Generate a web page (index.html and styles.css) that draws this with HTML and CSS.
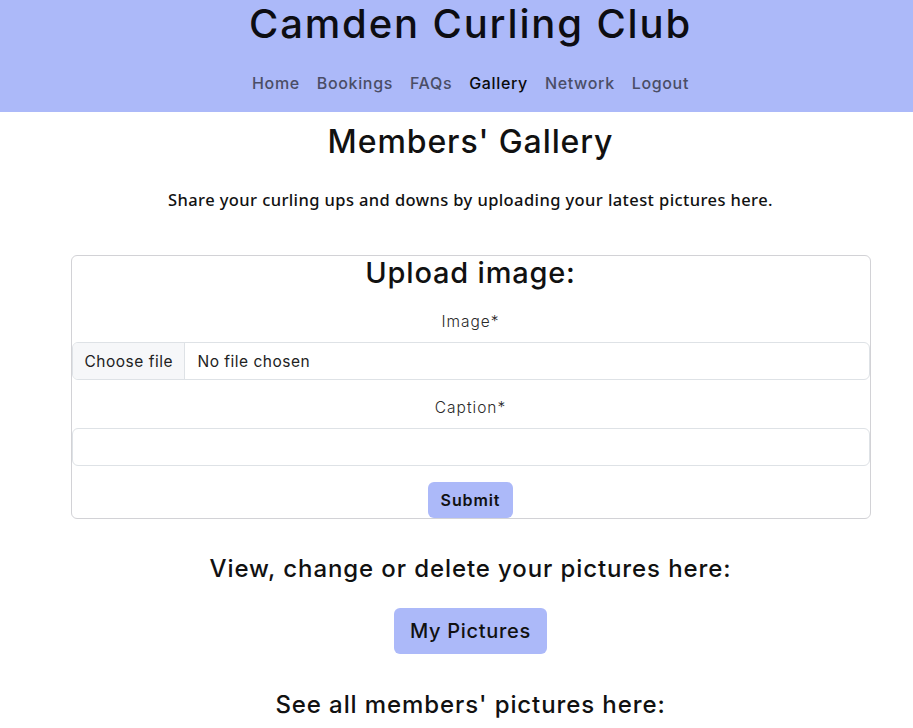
FILE: index.html
```html
<!DOCTYPE html>
<html lang="en">
<head>
<meta charset="utf-8">
<title>Camden Curling Club - Gallery</title>
<link rel="stylesheet" href="styles.css">
</head>
<body>
<header class="site-header">
  <h1 class="site-title">Camden Curling Club</h1>
  <nav class="nav">
    <a class="nav-link" href="#">Home</a>
    <a class="nav-link" href="#">Bookings</a>
    <a class="nav-link" href="#">FAQs</a>
    <a class="nav-link active" href="#">Gallery</a>
    <a class="nav-link" href="#">Network</a>
    <a class="nav-link" href="#">Logout</a>
  </nav>
</header>
<main class="page">
  <h2 class="page-title">Members' Gallery</h2>
  <p class="intro">Share your curling ups and downs by uploading your latest pictures here.</p>
  <form class="card">
    <h3 class="card-title">Upload image:</h3>
    <label class="field-label">Image*</label>
    <div class="file-input">
      <span class="file-btn">Choose file</span>
      <span class="file-name">No file chosen</span>
    </div>
    <label class="field-label second">Caption*</label>
    <div class="text-input"></div>
    <div class="submit-row"><button type="button" class="btn btn-sm">Submit</button></div>
  </form>
  <h4 class="section-title first">View, change or delete your pictures here:</h4>
  <button type="button" class="btn btn-lg">My Pictures</button>
  <h4 class="section-title">See all members' pictures here:</h4>
</main>
</body>
</html>
```
FILE: styles.css
```css
html, body { margin: 0; padding: 0; overflow: hidden; }
body {
  font-family: "Inter", "DejaVu Sans", sans-serif;
  color: #111;
  background: #fff;
}
.site-header {
  background: #acb9f9;
  height: 112px;
  padding-left: 28px;
  padding-top: 3px;
  box-sizing: border-box;
  text-align: center;
}
.site-title {
  margin: 0;
  font-size: 40px;
  font-weight: 500;
  line-height: 42px;
  color: #0d0d12;
  letter-spacing: 1.85px;
}
.nav {
  display: flex;
  justify-content: center;
  gap: 17px;
  margin-top: 28px;
}
.nav-link {
  font-size: 16px;
  font-weight: 500;
  color: #4a4d66;
  text-decoration: none;
  line-height: 20px;
  letter-spacing: 0.65px;
}
.nav-link.active { color: #0a0a0a; }
.page {
  padding-left: 28px;
  text-align: center;
}
.page-title {
  margin: 12px 0 0;
  font-size: 32px;
  font-weight: 500;
  line-height: 36px;
  letter-spacing: 0.9px;
}
.intro {
  margin: 29px 0 0;
  font-family: "Noto Sans", sans-serif;
  font-size: 16.5px;
  font-weight: 500;
  line-height: 22px;
  letter-spacing: 0.4px;
}
.card {
  width: 800px;
  margin: 44px auto 0;
  box-sizing: border-box;
  border: 1px solid #d2d2d6;
  border-radius: 6px;
  display: flex;
  flex-direction: column;
  align-items: stretch;
}
.card-title {
  margin: 0;
  font-size: 29px;
  font-weight: 500;
  line-height: 34px;
  letter-spacing: 0.8px;
}
.field-label {
  display: block;
  margin-top: 22px;
  margin-bottom: 10px;
  font-size: 15.5px;
  font-weight: 300;
  line-height: 20px;
  color: #2a2a2a;
  letter-spacing: 1px;
}
.field-label.second { margin-top: 18px; }
.file-input, .text-input {
  height: 38px;
  box-sizing: border-box;
  border: 1px solid #dee2e6;
  border-radius: 6px;
  display: flex;
  align-items: stretch;
  overflow: hidden;
  font-size: 15.5px;
  color: #222;
  letter-spacing: 0.5px;
}
.file-btn {
  background: #f6f7f9;
  border-right: 1px solid #dee2e6;
  padding: 0 0 0 12px;
  display: flex;
  align-items: center;
  width: 112px;
  flex: none;
  box-sizing: border-box;
  white-space: nowrap;
}
.file-name {
  display: flex;
  align-items: center;
  padding-left: 13px;
  white-space: nowrap;
}
.submit-row {
  margin-top: 16px;
  display: flex;
  justify-content: center;
}
.btn {
  font-family: inherit;
  background: #acb9f9;
  border: none;
  color: #111;
  cursor: pointer;
}
.btn-sm {
  width: 85px;
  height: 36px;
  border-radius: 6px;
  font-size: 16px;
  font-weight: 600;
  letter-spacing: 0.9px;
}
.btn-lg {
  width: 153px;
  height: 46px;
  border-radius: 6px;
  font-size: 20px;
  font-weight: 500;
  letter-spacing: 0.7px;
  margin-top: 25px;
}
.section-title {
  margin: 37px 0 0;
  font-size: 24px;
  font-weight: 500;
  line-height: 28px;
  letter-spacing: 0.9px;
}
.section-title.first { margin-top: 36px; }
```
